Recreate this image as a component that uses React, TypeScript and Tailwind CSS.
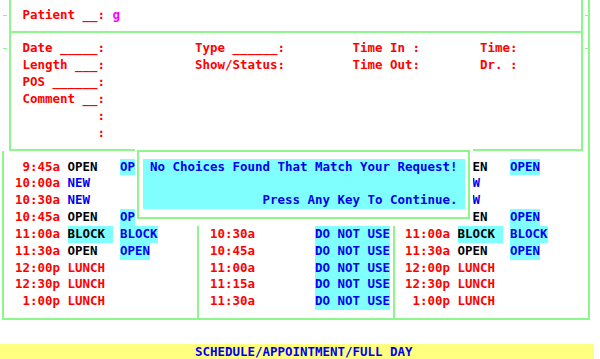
import React from "react";

type Kind = "open" | "new" | "lunch" | "block" | "cyan" | "none";

function Tag({ text, kind }: { text: string; kind: Kind }) {
  if (kind === "open") return <span className="text-black">{text}</span>;
  if (kind === "new") return <span className="text-[#0000f0]">{text}</span>;
  if (kind === "lunch") return <span className="text-[#ff0000]">{text}</span>;
  if (kind === "block")
    return <span className="inline-block h-[16.85px] bg-[#80ffff] text-black">{text}</span>;
  if (kind === "cyan")
    return <span className="inline-block h-[16.85px] bg-[#80ffff] text-[#0000f0]">{text}</span>;
  return null;
}

function Row({
  time,
  s1 = "",
  k1 = "none",
  s2 = "",
  k2 = "none",
}: {
  time: string;
  s1?: string;
  k1?: Kind;
  s2?: string;
  k2?: Kind;
}) {
  return (
    <div className="flex h-[16.85px] leading-[16.85px] whitespace-pre">
      <span className="w-[52.5px] shrink-0 text-[#ff0000]">{time}</span>
      <span className="w-[52.5px] shrink-0">
        <Tag text={s1} kind={k1} />
      </span>
      <span className="shrink-0">
        <Tag text={s2} kind={k2} />
      </span>
    </div>
  );
}

function DnuRow({ time }: { time: string }) {
  return (
    <div className="flex h-[16.85px] leading-[16.85px] whitespace-pre">
      <span className="w-[105px] shrink-0 text-[#ff0000]">{time}</span>
      <span className="shrink-0">
        <Tag text="DO NOT USE" kind="cyan" />
      </span>
    </div>
  );
}

function Blank() {
  return <div className="h-[16.85px]" />;
}

function DetailRow({ a, b = "", c = "", d = "" }: { a: string; b?: string; c?: string; d?: string }) {
  return (
    <div className="flex h-[16.85px] leading-[16.85px] whitespace-pre text-[#ff0000]">
      <span className="w-[172.5px] shrink-0">{a}</span>
      <span className="w-[157.5px] shrink-0">{b}</span>
      <span className="w-[127.5px] shrink-0">{c}</span>
      <span className="shrink-0">{d}</span>
    </div>
  );
}

export default function App() {
  return (
    <div className="relative w-[600px] h-[359px] overflow-hidden bg-white font-['DejaVu_Sans_Mono',monospace] font-bold text-[12.46px]">
      {/* top panel */}
      <div className="flex h-[151px]">
        <div className="w-[9px] shrink-0 flex flex-col">
          <div className="mt-[15px] ml-[3px] w-[4px] h-[1px] bg-[#8cf88c]" />
          <div className="mt-[32px] ml-[3px] w-[4px] h-[1px] bg-[#8cf88c]" />
        </div>
        <div className="w-[574px] shrink-0 border-x-2 border-b-2 border-[#8cf88c] flex flex-col">
          <div className="h-[33px] shrink-0 border-b-2 border-[#8cf88c] pt-[6.5px] pl-[11.5px] whitespace-pre leading-[16.85px]">
            <span className="text-[#ff0000]">Patient __: </span>
            <span className="text-[#ff00ff]">g</span>
          </div>
          <div className="pt-[7.3px] pl-[11.5px]">
            <DetailRow a="Date _____:" b="Type ______:" c="Time In :" d="Time:" />
            <DetailRow a="Length ___:" b="Show/Status:" c="Time Out:" d="Dr. :" />
            <DetailRow a="POS ______:" />
            <DetailRow a="Comment __:" />
            <DetailRow a="          :" />
            <DetailRow a="          :" />
          </div>
        </div>
        <div className="w-[5px] shrink-0 flex flex-col">
          <div className="mt-[15px] ml-[2px] w-[3px] h-[1px] bg-[#8cf88c]" />
          <div className="mt-[32px] ml-[2px] w-[3px] h-[1px] bg-[#8cf88c]" />
        </div>
        <div className="w-[2px] shrink-0 bg-[#8cf88c]" />
      </div>

      {/* schedule */}
      <div className="ml-[2px] w-[588px] h-[169px] border-x-2 border-b-2 border-[#8cf88c] flex">
        <div className="w-[195px] shrink-0 border-r-2 border-[#8cf88c] pl-[11px] pt-[7.5px]">
          <Row time=" 9:45a" s1="OPEN" k1="open" s2="OPEN" k2="cyan" />
          <Row time="10:00a" s1="NEW" k1="new" />
          <Row time="10:30a" s1="NEW" k1="new" />
          <Row time="10:45a" s1="OPEN" k1="open" s2="OPEN" k2="cyan" />
          <Row time="11:00a" s1="BLOCK " k1="block" s2="BLOCK" k2="cyan" />
          <Row time="11:30a" s1="OPEN" k1="open" s2="OPEN" k2="cyan" />
          <Row time="12:00p" s1="LUNCH" k1="lunch" />
          <Row time="12:30p" s1="LUNCH" k1="lunch" />
          <Row time=" 1:00p" s1="LUNCH" k1="lunch" />
        </div>
        <div className="w-[196px] shrink-0 border-r-2 border-[#8cf88c] pl-[11px] pt-[7.5px]">
          <Blank />
          <Blank />
          <Blank />
          <Blank />
          <DnuRow time="10:30a" />
          <DnuRow time="10:45a" />
          <DnuRow time="11:00a" />
          <DnuRow time="11:15a" />
          <DnuRow time="11:30a" />
        </div>
        <div className="flex-1 pl-[10px] pt-[7.5px]">
          <Row time="      " s1="OPEN" k1="open" s2="OPEN" k2="cyan" />
          <Row time="      " s1="NEW" k1="new" />
          <Row time="      " s1="NEW" k1="new" />
          <Row time="      " s1="OPEN" k1="open" s2="OPEN" k2="cyan" />
          <Row time="11:00a" s1="BLOCK " k1="block" s2="BLOCK" k2="cyan" />
          <Row time="11:30a" s1="OPEN" k1="open" s2="OPEN" k2="cyan" />
          <Row time="12:00p" s1="LUNCH" k1="lunch" />
          <Row time="12:30p" s1="LUNCH" k1="lunch" />
          <Row time=" 1:00p" s1="LUNCH" k1="lunch" />
        </div>
      </div>

      {/* status bar */}
      <div className="mt-[23.6px] w-[594px] h-[16.85px] leading-[16.85px] bg-[#ffff80] text-[#0000f0] pl-[195px] whitespace-pre">
        SCHEDULE/APPOINTMENT/FULL DAY
      </div>

      {/* dialog overlay */}
      <div className="absolute left-[135px] top-[147px] w-[337.5px] h-[79px] bg-white">
        <div className="ml-[2px] mt-[3px] w-[333px] h-[69px] border-2 border-[#8cf88c]">
          <div className="ml-[3.5px] mt-[6.5px] w-[322.5px] h-[50.55px] bg-[#80ffff] text-[#0000f0] pl-[7.5px] whitespace-pre leading-[16.85px]">
            <div className="h-[16.85px]">No Choices Found That Match Your Request!</div>
            <div className="h-[16.85px]"></div>
            <div className="h-[16.85px]">{"               Press Any Key To Continue."}</div>
          </div>
        </div>
      </div>
    </div>
  );
}
